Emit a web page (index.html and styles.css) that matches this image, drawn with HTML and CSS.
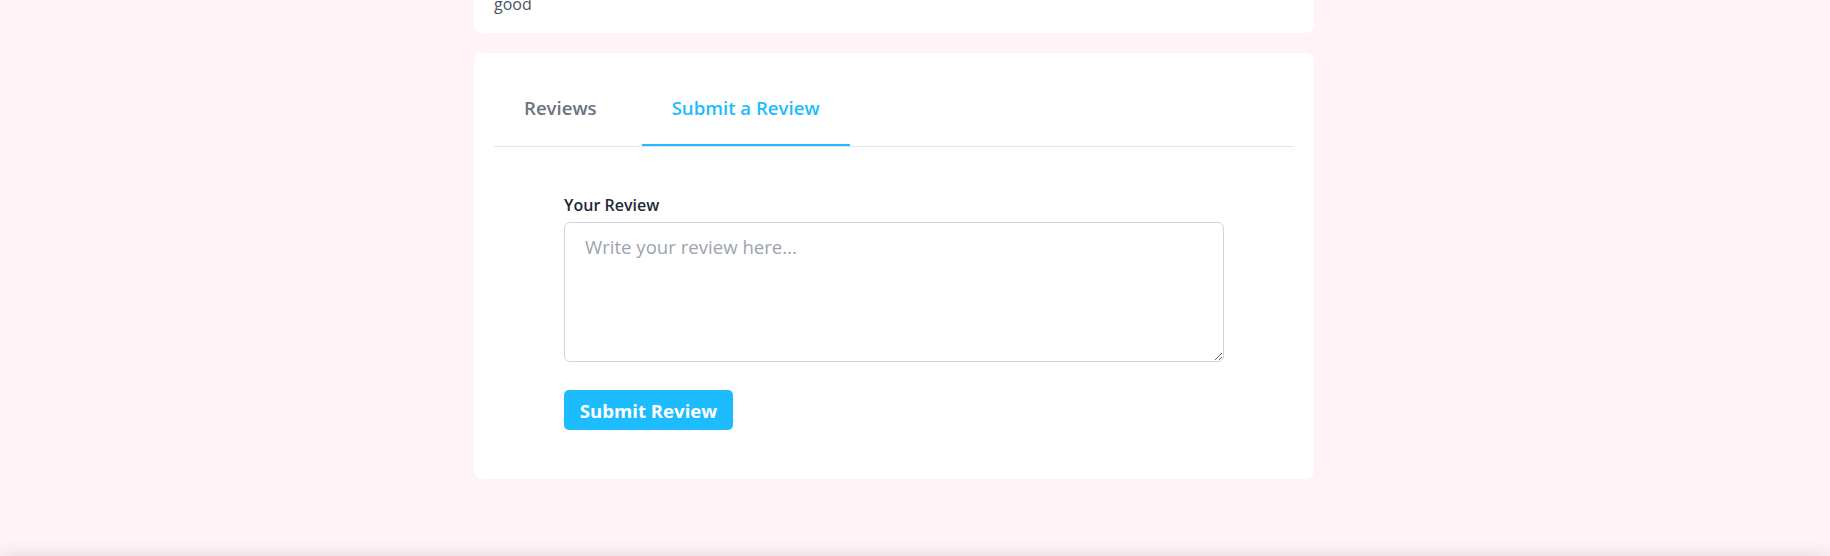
FILE: index.html
```html
<!DOCTYPE html>
<html lang="en">
<head>
<meta charset="utf-8">
<title>Submit a Review</title>
<link rel="stylesheet" href="styles.css">
</head>
<body>
<main class="page">
  <section class="card card-prev">
    <p class="review-text">good</p>
  </section>
  <section class="card card-reviews">
    <nav class="tabs">
      <button class="tab">Reviews</button>
      <button class="tab tab-active">Submit a Review</button>
    </nav>
    <form class="review-form">
      <label class="form-label" for="review">Your Review</label>
      <textarea id="review" class="form-textarea" placeholder="Write your review here..."></textarea>
      <button type="button" class="btn-submit">Submit Review</button>
    </form>
  </section>
</main>
<div class="bottom-bar"></div>
</body>
</html>
```

FILE: styles.css
```css
* { box-sizing: border-box; }
html, body { margin: 0; padding: 0; }
body {
  background: #fff3f7;
  font-family: "Open Sans", "Noto Sans", sans-serif;
  color: #374151;
  height: 556px;
  overflow: hidden;
}
.page {
  width: 840px;
  margin: -8px 0 0 474px;
  display: flex;
  flex-direction: column;
  gap: 20px;
}
.card {
  background: #ffffff;
  border-radius: 8px;
  padding: 20px;
}
.card-prev {
  border-radius: 0 0 8px 8px;
  padding: 0 20px 17px;
}
.review-text {
  margin: 0;
  font-size: 16px;
  line-height: 24px;
  color: #4b5563;
}
.tabs {
  display: flex;
  gap: 15px;
  border-bottom: 1px solid #e5e7eb;
}
.tab {
  font-family: inherit;
  font-size: 18.6px;
  font-weight: 600;
  line-height: 24px;
  background: none;
  border: none;
  border-bottom: 2px solid transparent;
  padding: 23px 30px 24px;
  color: #6b7280;
  cursor: pointer;
}
.tab-active {
  color: #1cbcff;
  border-bottom-color: #1cbcff;
}
.review-form {
  width: 660px;
  margin: 0 auto;
  padding: 46px 0 29px;
  display: flex;
  flex-direction: column;
  align-items: flex-start;
}
.form-label {
  font-size: 16px;
  font-weight: 600;
  line-height: 24px;
  color: #1f2937;
  margin-bottom: 5px;
}
.form-textarea {
  width: 660px;
  height: 140px;
  border: 1px solid #d1d5db;
  border-radius: 6px;
  padding: 12px 20px;
  font-family: inherit;
  font-size: 18.6px;
  line-height: 24px;
  color: #374151;
  resize: vertical;
  margin-bottom: 28px;
}
.form-textarea::placeholder { color: #9ca3af; }
.btn-submit {
  height: 40px;
  width: 169px;
  padding: 0;
  background: #1cbcff;
  color: #ffffff;
  border: none;
  border-radius: 5px;
  font-family: inherit;
  font-size: 18.6px;
  font-weight: 700;
  cursor: pointer;
}
.bottom-bar {
  position: fixed;
  left: 0;
  right: 0;
  bottom: -60px;
  height: 60px;
  background: #e4e1e3;
  box-shadow: 0 0 18px rgba(0, 0, 0, 0.12);
}
```
